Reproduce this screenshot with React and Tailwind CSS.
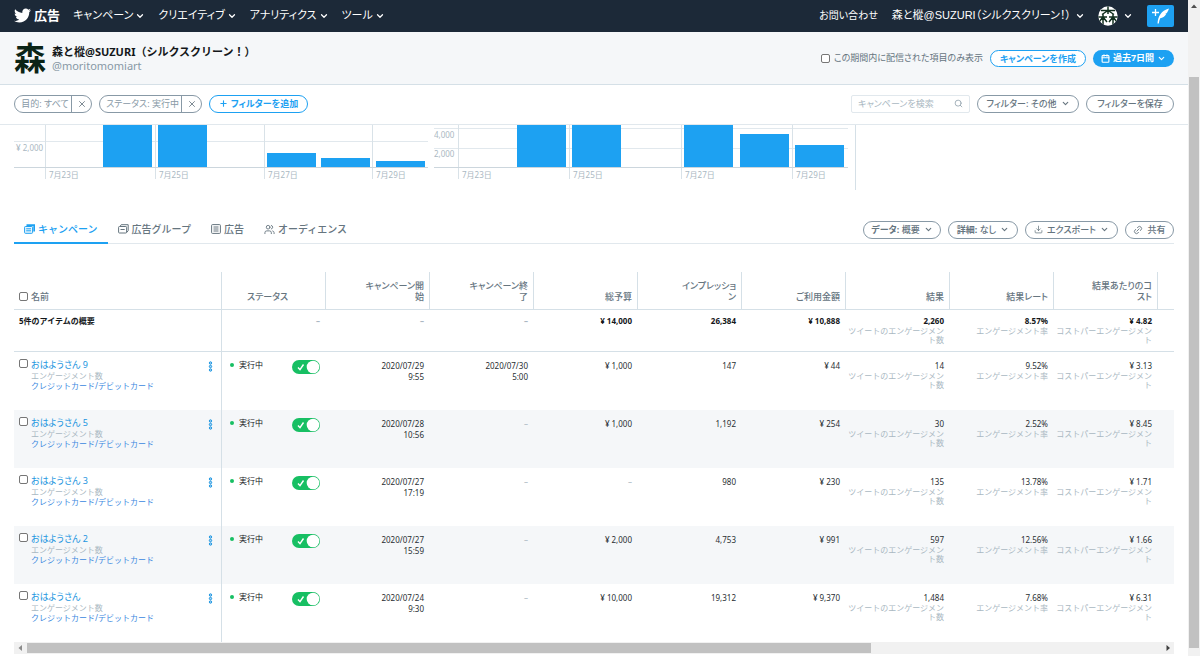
import { FaTwitter } from "react-icons/fa";
import { Calendar, ChevronDown, Download, Link2, Plus, Search, Users, X } from "lucide-react";

const navItems = ["キャンペーン", "クリエイティブ", "アナリティクス", "ツール"];

const columns = [
  "キャンペーン開\n始",
  "キャンペーン終\n了",
  "総予算",
  "インプレッショ\nン",
  "ご利用金額",
  "結果",
  "結果レート",
  "結果あたりのコ\nスト",
];

const campaigns = [
  { name: "おはようさん 9", start: "2020/07/29\n9:55", end: "2020/07/30\n5:00", budget: "¥ 1,000", imp: "147", spend: "¥ 44", result: "14", rate: "9.52%", cost: "¥ 3.13" },
  { name: "おはようさん 5", start: "2020/07/28\n10:56", end: "–", budget: "¥ 1,000", imp: "1,192", spend: "¥ 254", result: "30", rate: "2.52%", cost: "¥ 8.45" },
  { name: "おはようさん 3", start: "2020/07/27\n17:19", end: "–", budget: "–", imp: "980", spend: "¥ 230", result: "135", rate: "13.78%", cost: "¥ 1.71" },
  { name: "おはようさん 2", start: "2020/07/27\n15:59", end: "–", budget: "¥ 2,000", imp: "4,753", spend: "¥ 991", result: "597", rate: "12.56%", cost: "¥ 1.66" },
  { name: "おはようさん", start: "2020/07/24\n9:30", end: "–", budget: "¥ 10,000", imp: "19,312", spend: "¥ 9,370", result: "1,484", rate: "7.68%", cost: "¥ 6.31" },
];

const spendChart = {
  label: "ご利用金額",
  grid: [31, 141, 250, 358],
  lines: [16],
  ticks: [{ text: "¥ 2,000", x: 2, y: 26 }],
  bars: [
    { x: 89, y: 0 },
    { x: 144, y: 0 },
    { x: 253, y: 28 },
    { x: 307, y: 33 },
    { x: 362, y: 36 },
  ],
};

const impressionChart = {
  label: "インプレッション",
  grid: [24, 135, 247, 358],
  lines: [3, 23],
  ticks: [
    { text: "4,000", x: 0, y: 13 },
    { text: "2,000", x: 0, y: 32 },
  ],
  bars: [
    { x: 83, y: 0 },
    { x: 138, y: 0 },
    { x: 250, y: 0 },
    { x: 306, y: 9 },
    { x: 361, y: 20 },
  ],
};

const days = ["7月23日", "7月25日", "7月27日", "7月29日"];

function BarChart({ chart }) {
  return (
    <svg width="414" height="54" viewBox="0 0 414 54" role="img" aria-label={chart.label} className="shrink-0">
      {chart.lines.map((y) => (
        <rect key={y} x="0" y={y} width="414" height="1" fill="#e1e8ed" />
      ))}
      {chart.grid.map((x) => (
        <rect key={x} x={x} y="0" width="1" height="54" fill="#d9e2e8" />
      ))}
      {chart.bars.map((bar) => (
        <rect key={bar.x} x={bar.x} y={bar.y} width="49" height={42 - bar.y} fill="#1da1f2" />
      ))}
      <rect x="0" y="42" width="414" height="1" fill="#ccd6dd" />
      {chart.ticks.map((tick) => (
        <text key={tick.text} x={tick.x} y={tick.y} fontSize="8" fill="#aab8c2">
          {tick.text}
        </text>
      ))}
      {days.map((day, i) => (
        <text key={day} x={chart.grid[i] + 4} y="53" fontSize="8" fill="#aab8c2">
          {day}
        </text>
      ))}
    </svg>
  );
}

function PillButton({ children, className = "" }) {
  return (
    <button
      className={`flex h-[18px] shrink-0 items-center justify-center gap-1 whitespace-nowrap rounded-full border border-[#8899a6] bg-white text-[9px] font-medium text-[#66757f] ${className}`}
    >
      {children}
    </button>
  );
}

function FilterTag({ children, className = "" }) {
  return (
    <div className={`flex h-[18px] items-stretch rounded-full border border-[#8899a6] text-[9px] text-[#8899a6] ${className}`}>
      <span className="flex flex-1 items-center justify-center whitespace-nowrap pl-1">{children}</span>
      <button aria-label="削除" className="flex w-5 items-center justify-center border-l border-[#8899a6]">
        <X size={10} strokeWidth={2} color="#66757f" />
      </button>
    </div>
  );
}

function CheckBox({ id, label, className = "" }) {
  return (
    <input
      id={id}
      type="checkbox"
      aria-label={label}
      className={`size-[9px] shrink-0 appearance-none rounded-[2px] border border-[#767676] bg-white ${className}`}
    />
  );
}

function Toggle({ label }) {
  return (
    <label className="relative mt-px flex h-[14px] w-7 items-center rounded-full bg-[#17bf63]">
      <input type="checkbox" role="switch" defaultChecked aria-label={label} className="sr-only" />
      <svg width="28" height="14" viewBox="0 0 28 14" fill="none">
        <path d="M6 7.500l2 2.200L11.500 4.500" stroke="#fff" strokeWidth="1.400" />
        <circle cx="21" cy="7" r="6.300" fill="#fff" />
      </svg>
    </label>
  );
}

function Kebab() {
  return (
    <svg width="5" height="11" viewBox="0 0 5 11" fill="#a9d5f5" stroke="#1b95e0">
      <circle cx="2.500" cy="2" r="1.200" />
      <circle cx="2.500" cy="5.500" r="1.200" />
      <circle cx="2.500" cy="9" r="1.200" />
    </svg>
  );
}

function CampaignIcon() {
  return (
    <svg width="11" height="10" viewBox="0 0 11 10" fill="none" stroke="currentColor">
      <path d="M2.500 1.200h7.700v6.300" strokeWidth="1.800" />
      <rect x=".6" y="2.500" width="8" height="6.800" rx=".8" fill="#e8f5fd" />
      <path d="M2.200 4.800h4.800M2.200 6.800h4.800" />
    </svg>
  );
}

function GroupIcon() {
  return (
    <svg width="11" height="10" viewBox="0 0 11 10" fill="none" stroke="currentColor">
      <path d="M2.200 2.200L3.200.7h7v6l-1.500 1.800" />
      <rect x=".6" y="2.500" width="8" height="6.500" rx=".8" />
      <path d="M2.500 5.500h4.200" />
    </svg>
  );
}

function AdIcon() {
  return (
    <svg width="10" height="10" viewBox="0 0 10 10" fill="none" stroke="currentColor">
      <rect x=".6" y=".6" width="8.800" height="8.800" rx=".8" />
      <path d="M2.500 3h5M2.500 5h5M2.500 7h5" />
    </svg>
  );
}

function ComposeIcon() {
  return (
    <svg width="19" height="18" viewBox="0 0 19 18" fill="none">
      <path d="M1 5.500h7M4.500 2v7" stroke="#fff" strokeWidth="1.300" />
      <path d="M6.500 16.500C7 9.500 10 3.500 18 1.500c-.8 1.700-.8 2.600-2 4.200-.5.700-1.400.8-2 .8.600.2.900.3 1.200.5-1.400 2.600-3.600 4-6 4.300-.7 1.500-1.200 3.300-1.400 5.200z" fill="#fff" />
    </svg>
  );
}

function MiniAvatar() {
  return (
    <svg width="20" height="20" viewBox="0 0 20 20" fill="none">
      <defs>
        <clipPath id="avatar-clip">
          <circle cx="10" cy="10" r="9.700" />
        </clipPath>
      </defs>
      <g clipPath="url(#avatar-clip)">
        <rect width="20" height="20" fill="#fff" />
        <g stroke="#12301f" strokeWidth="1.500">
          <path d="M3 4.500h14M10 0v8M10 4.500L4 8.500M10 4.500l6 4M0 11h9M11 11h9M5 8v11M15 8v11M5 11l-4 5M5 11l4 5M15 11l-4 5M15 11l4 5" />
        </g>
      </g>
    </svg>
  );
}

function TopNav() {
  return (
    <header className="flex h-8 items-center bg-[#1c2938] px-[14px] pb-px text-[11px] text-white">
      <a href="#" className="flex w-[59px] items-center gap-[3px] text-[13px] font-bold">
        <FaTwitter size={17} />
        広告
      </a>
      <nav className="flex gap-[13px]">
        {navItems.map((item) => (
          <button key={item} className="flex items-center gap-[2px] whitespace-nowrap">
            {item}
            <ChevronDown size={10} strokeWidth={3} />
          </button>
        ))}
      </nav>
      <div className="ml-auto flex items-center whitespace-nowrap">
        <a href="#" className="mr-[14px] text-[10px]">お問い合わせ</a>
        <button className="mr-[13px] flex items-center gap-1 font-[Liberation_Sans,Noto_Sans_CJK_JP,sans-serif]">
          森と樅@SUZURI（シルクスクリーン！）
          <ChevronDown size={10} strokeWidth={3} />
        </button>
        <button aria-label="アカウント" className="mr-[14px] flex items-center gap-[5px]">
          <MiniAvatar />
          <ChevronDown size={10} strokeWidth={3} />
        </button>
        <button aria-label="ツイートする" className="flex h-[22px] w-[27px] items-center justify-center rounded-[2px] bg-[#1da1f2]">
          <ComposeIcon />
        </button>
      </div>
    </header>
  );
}

function AccountBar() {
  return (
    <section className="flex h-[53px] items-center border-b border-[#d5e0e7] bg-[#f5f7f9] px-[14px]">
      <span className="flex size-8 items-center justify-center text-[32px] font-bold leading-8 text-[#0b2416]">森</span>
      <div className="ml-[6px] pt-[2px]">
        <h1 className="text-[11px] font-bold leading-[14px] text-[#14171a] [font-feature-settings:normal]">
          森と樅@SUZURI（シルクスクリーン！）
        </h1>
        <p className="text-[11px] leading-[14px] text-[#8899a6]">@moritomomiart</p>
      </div>
      <div className="ml-auto flex items-center">
        <CheckBox id="delivered" />
        <label htmlFor="delivered" className="ml-1 mr-[7px] text-[9px] text-[#66757f]">
          この期間内に配信された項目のみ表示
        </label>
        <button className="mr-[7px] h-[17px] w-[96px] rounded-full border border-[#1da1f2] bg-white text-[9px] font-bold leading-[15px] text-[#1da1f2]">
          キャンペーンを作成
        </button>
        <button className="flex h-[17px] w-[81px] items-center justify-center gap-[3px] rounded-full bg-[#1da1f2] text-[9px] font-bold text-white">
          <Calendar size={9} strokeWidth={3} />
          過去7日間
          <ChevronDown size={9} strokeWidth={3} />
        </button>
      </div>
    </section>
  );
}

function FilterBar() {
  return (
    <section className="flex h-10 items-center gap-[7px] border-b border-[#e1e8ed] px-[14px] pb-[2px]">
      <FilterTag className="w-[78px]">目的: すべて</FilterTag>
      <FilterTag className="w-[103px]">ステータス: 実行中</FilterTag>
      <button className="flex h-[18px] w-[99px] items-center justify-center gap-[3px] rounded-full border border-[#1da1f2] text-[9px] font-bold text-[#1da1f2]">
        <Plus size={9} strokeWidth={3} />
        フィルターを追加
      </button>
      <label className="ml-auto flex h-[18px] w-[119px] items-center rounded-[2px] border border-[#e1e8ed] px-[6px]">
        <input
          type="search"
          aria-label="キャンペーンを検索"
          placeholder="キャンペーンを検索"
          className="min-w-0 flex-1 bg-transparent text-[9px] outline-none placeholder:text-[#aab8c2]"
        />
        <Search size={9} color="#8899a6" />
      </label>
      <PillButton className="w-[102px]">
        フィルター: その他
        <ChevronDown size={9} strokeWidth={3} />
      </PillButton>
      <PillButton className="w-[88px]">フィルターを保存</PillButton>
    </section>
  );
}

function Tab({ icon, children, active }) {
  return (
    <a
      href="#"
      className={`-mb-px flex items-center gap-[3px] border-b-2 px-[10px] pt-[2px] [font-feature-settings:normal] ${active ? "border-[#1da1f2] text-[#1da1f2]" : "border-transparent"}`}
    >
      {icon}
      {children}
    </a>
  );
}

function TabBar() {
  return (
    <div className="mx-[14px] flex h-[30px] items-stretch border-b border-[#e1e8ed] text-[10px] font-medium text-[#66757f]">
      <Tab active icon={<CampaignIcon />}>キャンペーン</Tab>
      <Tab icon={<GroupIcon />}>広告グループ</Tab>
      <Tab icon={<AdIcon />}>広告</Tab>
      <Tab icon={<Users size={11} />}>オーディエンス</Tab>
      <div className="ml-auto flex items-center gap-[7px] pt-[2px]">
        <PillButton className="w-[78px]">
          <span><b>データ:</b> 概要</span>
          <ChevronDown size={9} strokeWidth={3} />
        </PillButton>
        <PillButton className="w-[70px]">
          <span><b>詳細:</b> なし</span>
          <ChevronDown size={9} strokeWidth={3} />
        </PillButton>
        <PillButton className="w-[93px] font-bold">
          <Download size={9} />
          エクスポート
          <ChevronDown size={9} strokeWidth={3} />
        </PillButton>
        <PillButton className="w-[49px] font-bold">
          <Link2 size={10} className="-rotate-45" />
          共有
        </PillButton>
      </div>
    </div>
  );
}

function ValueCell({ value, note, bold }) {
  return (
    <td className={`whitespace-pre-line pr-[6px] text-right align-top ${bold ? "border-b border-[#d5e0e7] pt-[5px] font-bold text-[#14171a]" : "pt-[8px] text-[#292f33]"}`}>
      {value === "–" ? <span className="text-[#aab8c2]">–</span> : value}
      {note && <div className="text-[8px] font-normal leading-[9px] text-[#aab8c2]">{note}</div>}
    </td>
  );
}

function CampaignTable() {
  return (
    <table className="w-full table-fixed border-separate border-spacing-0 text-[8px] leading-[11px] [font-feature-settings:normal]">
      <colgroup>
        <col className="w-[208px]" />
        <col className="w-[104px]" />
        {columns.map((c) => (
          <col key={c} className="w-[104px]" />
        ))}
        <col />
      </colgroup>
      <thead className="[font-feature-settings:'palt']">
        <tr className="h-[38px] text-[9px] text-[#66757f]">
          <th className="border-b border-r border-[#d5e0e7] pb-[7px] pl-[5px] text-left align-bottom font-medium">
            <span className="flex items-center gap-[3px]">
              <CheckBox label="すべて選択" />
              名前
            </span>
          </th>
          <th className="border-b border-r border-[#d5e0e7] pb-[7px] pl-[25px] text-left align-bottom font-medium">ステータス</th>
          {columns.map((c) => (
            <th key={c} className="whitespace-pre-line border-b border-r border-[#d5e0e7] pb-[7px] pr-[5px] text-right align-bottom font-medium">
              {c}
            </th>
          ))}
          <th className="border-b border-[#d5e0e7]" />
        </tr>
      </thead>
      <tbody>
        <tr className="h-[42px]">
          <th className="border-b border-r border-[#d5e0e7] pl-[5px] pt-[5px] text-left align-top font-bold text-[#14171a]">5件のアイテムの概要</th>
          <ValueCell bold value="–" />
          <ValueCell bold value="–" />
          <ValueCell bold value="–" />
          <ValueCell bold value="¥ 14,000" />
          <ValueCell bold value="26,384" />
          <ValueCell bold value="¥ 10,888" />
          <ValueCell bold value="2,260" note={"ツイートのエンゲージメン\nト数"} />
          <ValueCell bold value="8.57%" note="エンゲージメント率" />
          <ValueCell bold value="¥ 4.82" note={"コストパーエンゲージメン\nト"} />
          <td className="border-b border-[#d5e0e7]" />
        </tr>
        {campaigns.map((c) => (
          <tr key={c.name} className="h-[58px] even:bg-white odd:bg-[#f5f7f9]">
            <td className="border-r border-[#d5e0e7] pl-[5px] pr-2 pt-[7px] align-top">
              <div className="flex items-start">
                <CheckBox label={c.name} />
                <div className="ml-[3px] flex-1 text-[8px] leading-[10px]">
                  <a href="#" className="block text-[9px] leading-[12px] text-[#1b95e0] [font-feature-settings:'palt']">{c.name}</a>
                  <div className="text-[#aab8c2]">エンゲージメント数</div>
                  <a href="#" className="block whitespace-nowrap text-[#3b88e0]">クレジットカード/デビットカード</a>
                </div>
                <button aria-label="メニュー" className="mt-[2px]">
                  <Kebab />
                </button>
              </div>
            </td>
            <td className="pl-2 pr-[6px] pt-[7px] align-top">
              <div className="flex items-start">
                <i className="mt-1 size-1 rounded-full bg-[#17bf63]" />
                <span className="ml-[5px] flex-1 leading-[12px] text-[#14171a]">実行中</span>
                <Toggle label={c.name} />
              </div>
            </td>
            <ValueCell value={c.start} />
            <ValueCell value={c.end} />
            <ValueCell value={c.budget} />
            <ValueCell value={c.imp} />
            <ValueCell value={c.spend} />
            <ValueCell value={c.result} note={"ツイートのエンゲージメン\nト数"} />
            <ValueCell value={c.rate} note="エンゲージメント率" />
            <ValueCell value={c.cost} note={"コストパーエンゲージメン\nト"} />
            <td />
          </tr>
        ))}
      </tbody>
    </table>
  );
}

function Arrow({ d, color }) {
  return (
    <svg width="12" height="12" viewBox="0 0 12 12" fill={color} className="shrink-0">
      <path d={d} />
    </svg>
  );
}

export default function App() {
  return (
    <div lang="ja" className="flex min-h-screen bg-white font-[Noto_Sans,Noto_Sans_CJK_JP,sans-serif] [font-feature-settings:'palt']">
      <div className="min-w-0 flex-1">
        <TopNav />
        <AccountBar />
        <FilterBar />
        <section className="flex h-[89px] items-start px-[14px]">
          <div className="flex h-[65px] gap-[6px] border-r border-[#d5e0e7] pr-[7px] [font-feature-settings:normal]">
            <BarChart chart={spendChart} />
            <BarChart chart={impressionChart} />
          </div>
        </section>
        <TabBar />
        <main className="px-[14px] pt-7">
          <CampaignTable />
          <div className="flex h-3 items-center bg-[#f1f1f1]">
            <Arrow d="M8 3v6L4.500 6z" color="#8b8b8b" />
            <div className="ml-px h-[10px] w-[844px] bg-[#c1c1c1]" />
            <span className="flex-1" />
            <Arrow d="M4.500 3v6L8 6z" color="#404040" />
          </div>
        </main>
      </div>
      <aside className="flex w-3 flex-col items-center bg-[#f1f1f1] pb-2">
        <Arrow d="M3 8h6L6 4.500z" color="#505050" />
        <div className="mt-[65px] w-[10px] flex-1 bg-[#c1c1c1]" />
      </aside>
    </div>
  );
}
